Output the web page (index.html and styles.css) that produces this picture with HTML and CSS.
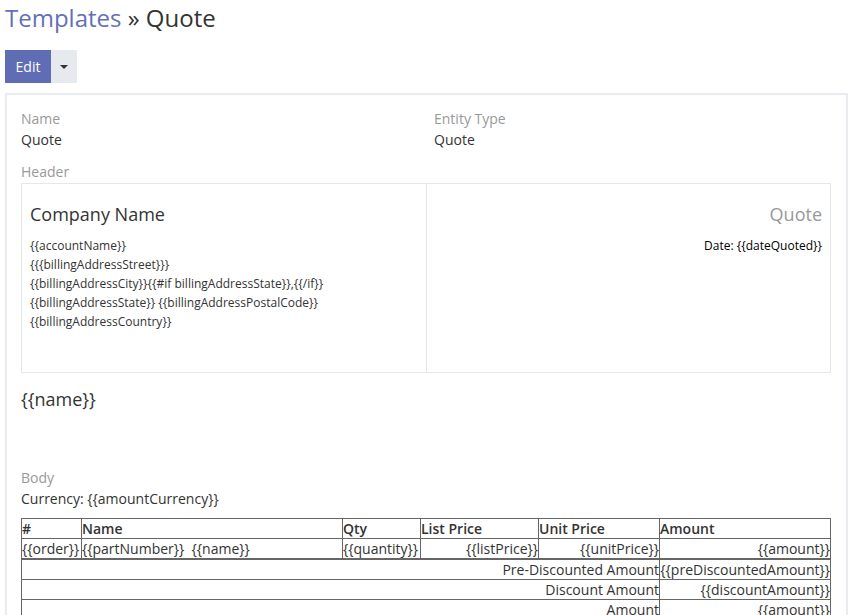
FILE: index.html
```html
<!DOCTYPE html>
<html>
<head>
  <link rel="stylesheet" href="styles.css">
</head>
<body>
  <div class="page">
    <h3 class="page-title"><a href="#">Templates</a> &raquo; Quote</h3>

    <div class="btn-group">
      <button class="btn btn-primary">Edit</button>
      <button class="btn btn-default dropdown-toggle"><span class="caret"></span></button>
    </div>

    <div class="panel">
      <div class="row">
        <div class="field">
          <div class="field-label">Name</div>
          <div class="field-value">Quote</div>
        </div>
        <div class="field">
          <div class="field-label">Entity Type</div>
          <div class="field-value">Quote</div>
        </div>
      </div>

      <div class="field header-field">
        <div class="field-label">Header</div>
        <div class="header-box">
          <div class="header-cell">
            <div class="company-name">Company Name</div>
            <div class="address">
              {{accountName}}<br>
              {{{billingAddressStreet}}}<br>
              {{billingAddressCity}}{{#if billingAddressState}},{{/if}}<br>
              {{billingAddressState}} {{billingAddressPostalCode}}<br>
              {{billingAddressCountry}}
            </div>
          </div>
          <div class="header-cell right">
            <div class="doc-title">Quote</div>
            <div class="address">Date: {{dateQuoted}}</div>
          </div>
        </div>
      </div>

      <div class="record-name">{{name}}</div>

      <div class="field body-field">
        <div class="field-label">Body</div>
        <div class="field-value">Currency: {{amountCurrency}}</div>

        <table class="items">
          <colgroup>
            <col style="width: 60px">
            <col style="width: 261px">
            <col style="width: 78px">
            <col style="width: 118px">
            <col style="width: 121px">
            <col style="width: 171px">
          </colgroup>
          <tr>
            <th>#</th>
            <th>Name</th>
            <th>Qty</th>
            <th>List Price</th>
            <th>Unit Price</th>
            <th>Amount</th>
          </tr>
          <tr>
            <td>{{order}}</td>
            <td>{{partNumber}}&nbsp; {{name}}</td>
            <td>{{quantity}}</td>
            <td class="num">{{listPrice}}</td>
            <td class="num">{{unitPrice}}</td>
            <td class="num">{{amount}}</td>
          </tr>
        </table>

        <table class="totals">
          <colgroup>
            <col style="width: 638px">
            <col style="width: 171px">
          </colgroup>
          <tr>
            <td>Pre-Discounted Amount</td>
            <td>{{preDiscountedAmount}}</td>
          </tr>
          <tr>
            <td>Discount Amount</td>
            <td>{{discountAmount}}</td>
          </tr>
          <tr>
            <td>Amount</td>
            <td>{{amount}}</td>
          </tr>
        </table>
      </div>
    </div>
  </div>
</body>
</html>
```

FILE: styles.css
```css
body {
  font-family: "Open Sans", "Liberation Sans", sans-serif;
  font-size: 14px;
  color: #333;
  margin: 0;
  background: #fff;
}

.page {
  padding: 0 10px 0 5px;
}

.page-title {
  font-size: 24px;
  font-weight: 400;
  line-height: 26px;
  margin: 5px 0 19px 0;
  color: #333;
}

.page-title a {
  color: #6570b8;
  text-decoration: none;
}

.btn-group {
  display: flex;
  height: 33px;
}

.btn {
  font-family: inherit;
  font-size: 14px;
  border: none;
  margin: 0;
  cursor: pointer;
  height: 33px;
}

.btn-primary {
  background: #5f6eb4;
  color: #fff;
  width: 46px;
  padding: 0;
}

.btn-default {
  background: #e6e9ed;
  width: 26px;
  padding: 0;
  display: flex;
  align-items: center;
  justify-content: center;
}

.caret {
  width: 0;
  height: 0;
  border-top: 4px solid #333;
  border-left: 4px solid transparent;
  border-right: 4px solid transparent;
}

.panel {
  margin-top: 10px;
  border: 2px solid #e8ebef;
  padding: 13px 15px 0 14px;
  height: 600px;
}

.row {
  display: grid;
  grid-template-columns: 413px 1fr;
}

.field-label {
  color: #999;
  line-height: 21px;
}

.field-value {
  line-height: 21px;
}

.header-field {
  margin-top: 11px;
}

.header-box {
  margin-top: 1px;
  border: 1px solid #e5e7ea;
  display: grid;
  grid-template-columns: 1fr 1fr;
  height: 188px;
}

.header-cell {
  padding: 8px;
}

.header-cell + .header-cell {
  border-left: 1px solid #e5e7ea;
}

.header-cell.right {
  text-align: right;
}

.company-name,
.doc-title {
  font-size: 18px;
  line-height: 24px;
  margin-top: 10px;
}

.doc-title {
  color: #999;
}

.address {
  font-size: 12px;
  line-height: 19px;
  margin-top: 10px;
}

.header-cell.right .address {
  color: #000;
}

.record-name {
  font-size: 18px;
  line-height: 24px;
  margin-top: 14px;
}

.body-field {
  margin-top: 56px;
}

table {
  border-collapse: collapse;
  table-layout: fixed;
  width: 810px;
  color: #333;
}

.items {
  margin-top: 9px;
}

th,
td {
  border: 1px solid #666;
  padding: 0;
  line-height: 19px;
  font-size: 14px;
  text-align: left;
  white-space: nowrap;
  overflow: hidden;
}

th {
  font-weight: 600;
}

td.num,
.totals td {
  text-align: right;
}
```
